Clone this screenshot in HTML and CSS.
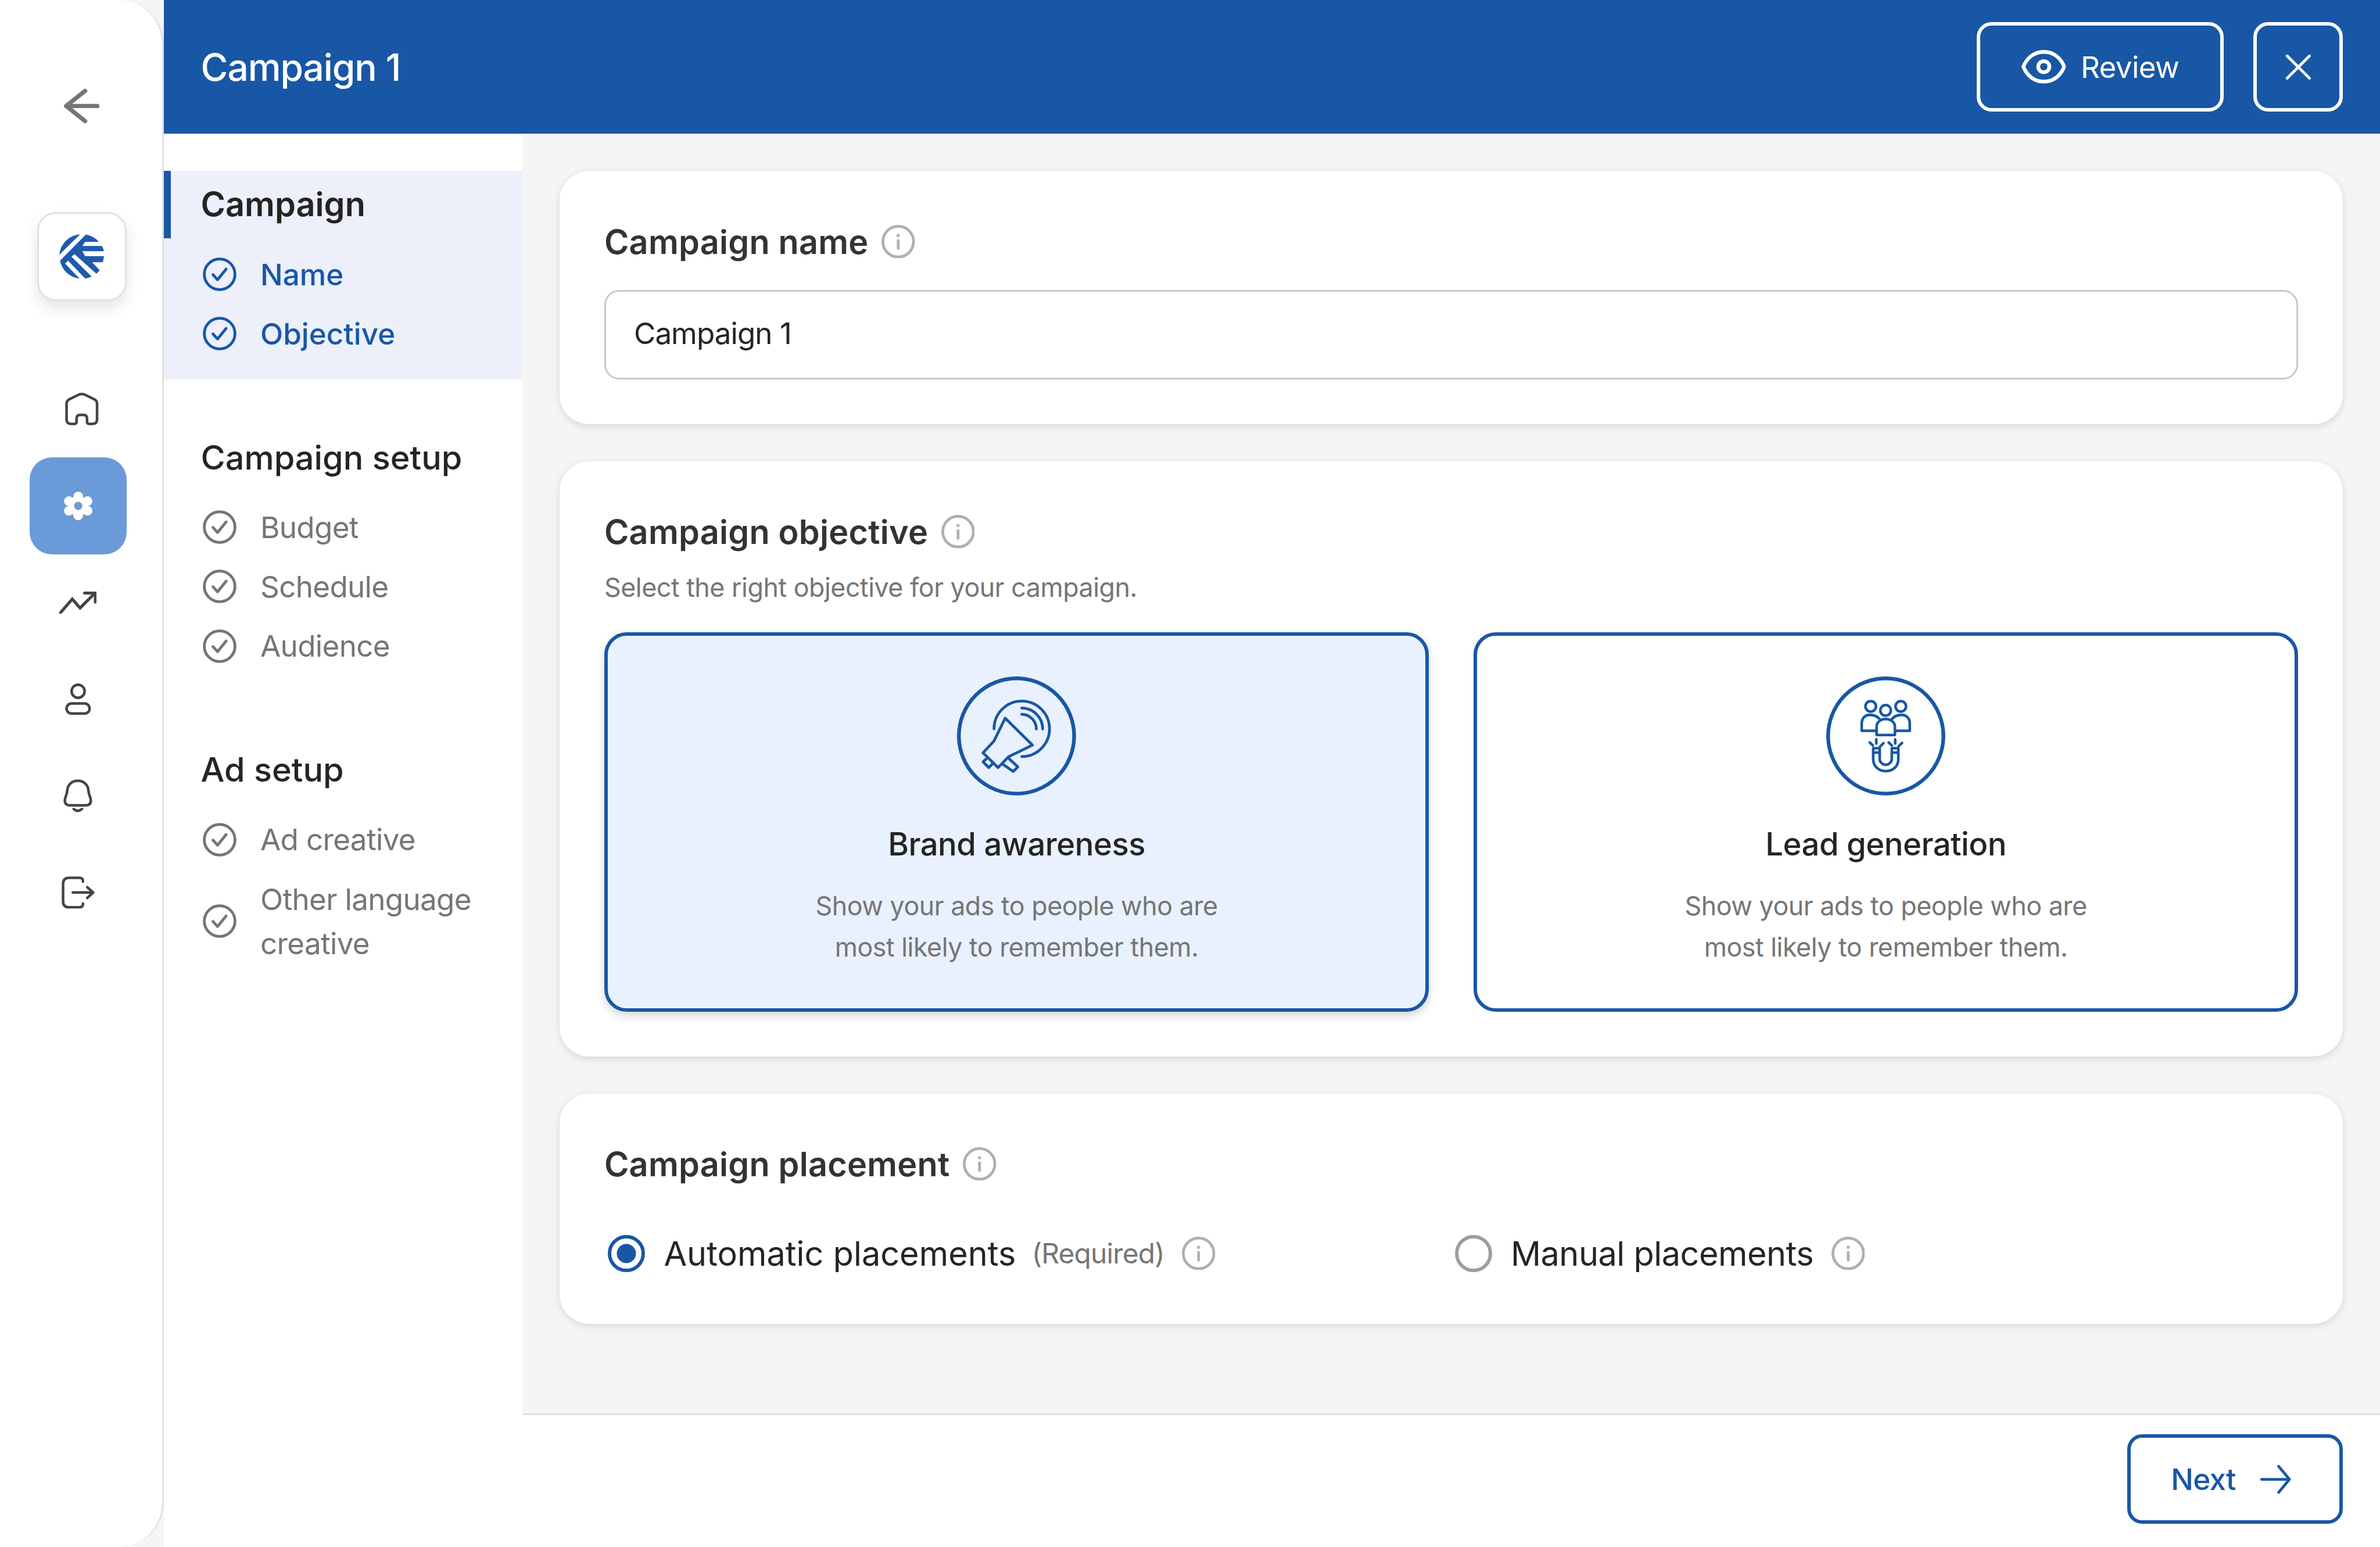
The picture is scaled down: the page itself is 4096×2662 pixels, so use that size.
FILE: index.html
```html
<!DOCTYPE html>
<html lang="en">

<head>
    <meta charset="UTF-8">
    <title>Campaign 1</title>
    <link rel="stylesheet" href="styles.css">
</head>

<body>
    <!-- shared icons -->
    <svg class="defs" aria-hidden="true">
        <symbol id="icon-check" viewBox="0 0 20 20">
            <circle cx="10" cy="10" r="8.25" fill="none" stroke="currentColor" stroke-width="1.5"/>
            <path d="M6.4 10.2L8.9 12.9L13.5 7.2" fill="none" stroke="currentColor" stroke-width="1.5" stroke-linecap="round" stroke-linejoin="round"/>
        </symbol>
        <symbol id="icon-info" viewBox="0 0 18 18">
            <circle cx="9" cy="9" r="8.25" fill="none" stroke="currentColor" stroke-width="1.5"/>
            <circle cx="9" cy="5.7" r="0.85" fill="currentColor"/>
            <path d="M9 8.4V12.6" fill="none" stroke="currentColor" stroke-width="1.5" stroke-linecap="round"/>
        </symbol>
    </svg>

    <div class="app">
        <aside class="sidebar">
            <div class="side-top">
                <svg class="back-icon" viewBox="0 0 19 19" fill="none" stroke="currentColor" stroke-width="2.3" stroke-linecap="round" stroke-linejoin="round">
                    <path d="M18 9.5H1.2M11.4 1.4L1.2 9.5L11.4 17.6"/>
                </svg>
                <div class="logo-box">
                    <svg class="logo" viewBox="25 28 285 285" fill="#1e5bae">
                        <path d="M158 29L25 160A143 143 0 0 1 158 29Z"/>
                        <path d="M30 197L195 30A143 143 0 0 1 278 77L190 77L172 103L298 103A143 143 0 0 1 310 137L172 137L190 168L310 168A143 143 0 0 1 303 207L235 207L283 258A143 143 0 0 1 262 280L122 155L103 172L232 298A143 143 0 0 1 190 311L82 198L62 215L155 312A143 143 0 0 1 30 197Z"/>
                    </svg>
                </div>
            </div>
            <nav class="side-nav">
                <div class="side-item side-item-home">
                    <svg class="icon-home" viewBox="0 0 18 18" fill="none" stroke="currentColor" stroke-width="1.4" stroke-linejoin="round">
                        <path d="M7.6 1.2Q9 .6 10.4 1.2L15.8 3.8Q17.2 4.5 17.2 6.2V14.6Q17.2 17 14.8 17H13Q11.8 17 11.8 15.8V14Q11.8 12.2 10 12.2H8Q6.2 12.2 6.2 14V15.8Q6.2 17 5 17H3.2Q.8 17 .8 14.6V6.2Q.8 4.5 2.2 3.8Z"/>
                    </svg>
                </div>
                <div class="side-item side-item-active">
                    <svg class="icon-gear" viewBox="0 0 16 16">
                        <g fill="#fff">
                            <circle cx="8" cy="8" r="5.4"/>
                            <circle cx="8" cy="2.9" r="2.6"/>
                            <circle cx="8" cy="13.1" r="2.6"/>
                            <circle cx="3.0" cy="5.4" r="2.6"/>
                            <circle cx="13" cy="5.4" r="2.6"/>
                            <circle cx="3.0" cy="10.6" r="2.6"/>
                            <circle cx="13" cy="10.6" r="2.6"/>
                        </g>
                        <circle cx="8" cy="8" r="2.2" fill="#6a9ad8"/>
                    </svg>
                </div>
                <div class="side-item">
                    <svg class="icon-trend" viewBox="0 0 20 12" fill="none" stroke="currentColor" stroke-width="1.6" stroke-linecap="round">
                        <path d="M.6 11.4L7 4L11.2 8.8L19 1"/>
                        <path d="M13.6 .8H19.4V5.6"/>
                    </svg>
                </div>
                <div class="side-item">
                    <svg class="icon-user" viewBox="0 0 14 17" fill="none" stroke="currentColor" stroke-width="1.4">
                        <circle cx="7" cy="4.2" r="3.5"/>
                        <rect x=".8" y="10.8" width="12.4" height="5.4" rx="2.7"/>
                    </svg>
                </div>
                <div class="side-item">
                    <svg class="icon-bell" viewBox="0 0 16 18" fill="none" stroke="currentColor" stroke-width="1.4" stroke-linecap="round">
                        <path d="M7.8 .8C4.5 .8 2.3 3 2.1 6C2 8.5 .8 9.5 .8 11.5C.8 13.3 2 14 3.5 14H12C13.6 14 14.8 13.3 14.8 11.5C14.8 9.5 13.6 8.5 13.5 6C13.3 3 11 .8 7.8 .8Z"/>
                        <path d="M5.6 16Q7.8 17.8 10 16"/>
                    </svg>
                </div>
                <div class="side-item">
                    <svg class="icon-logout" viewBox="0 0 18 17.4" fill="none" stroke="currentColor" stroke-width="1.4" stroke-linecap="round" stroke-linejoin="round">
                        <path d="M11.5 2.8V2.4Q11.5 .8 9.5 .8H4Q.8 .8 .8 4V13.4Q.8 16.6 4 16.6H9.5Q11.5 16.6 11.5 15V14.6"/>
                        <path d="M6 8.7H17M13.8 5.8L17 8.7L13.8 11.6"/>
                    </svg>
                </div>
            </nav>
        </aside>

        <div class="main">
            <header class="topbar">
                <h1 class="topbar-title">Campaign 1</h1>
                <div class="topbar-actions">
                    <button class="btn-outline btn-review">
                        <svg class="icon-eye" viewBox="0 0 24 18" fill="none" stroke="currentColor" stroke-width="2" stroke-linejoin="round">
                            <path d="M1 9C3 4 7 1 12 1C17 1 21 4 23 9C21 14 17 17 12 17C7 17 3 14 1 9Z"/>
                            <circle cx="12" cy="9" r="3"/>
                        </svg>
                        Review
                    </button>
                    <button class="btn-outline btn-close">
                        <svg class="icon-close" viewBox="0 0 14 14" fill="none" stroke="currentColor" stroke-width="1.5" stroke-linecap="round">
                            <path d="M1 1L13 13M13 1L1 13"/>
                        </svg>
                    </button>
                </div>
            </header>

            <div class="body">
                <div class="steps">
                    <section class="step-group step-group-active">
                        <h2 class="step-title">Campaign</h2>
                        <div class="step"><svg class="step-icon"><use href="#icon-check"/></svg>Name</div>
                        <div class="step"><svg class="step-icon"><use href="#icon-check"/></svg>Objective</div>
                    </section>
                    <section class="step-group">
                        <h2 class="step-title">Campaign setup</h2>
                        <div class="step"><svg class="step-icon"><use href="#icon-check"/></svg>Budget</div>
                        <div class="step"><svg class="step-icon"><use href="#icon-check"/></svg>Schedule</div>
                        <div class="step"><svg class="step-icon"><use href="#icon-check"/></svg>Audience</div>
                    </section>
                    <section class="step-group">
                        <h2 class="step-title">Ad setup</h2>
                        <div class="step"><svg class="step-icon"><use href="#icon-check"/></svg>Ad creative</div>
                        <div class="step"><svg class="step-icon"><use href="#icon-check"/></svg><span>Other language<br>creative</span></div>
                    </section>
                </div>

                <div class="right">
                    <div class="content">
                        <section class="card">
                            <h3 class="card-title">Campaign name <svg class="icon-info"><use href="#icon-info"/></svg></h3>
                            <input class="name-input" type="text" value="Campaign 1">
                        </section>

                        <section class="card">
                            <h3 class="card-title">Campaign objective <svg class="icon-info"><use href="#icon-info"/></svg></h3>
                            <p class="card-sub">Select the right objective for your campaign.</p>
                            <div class="objectives">
                                <div class="objective objective-selected">
                                    <svg class="objective-icon" viewBox="177 107 768 768" fill="none" stroke="currentColor" stroke-width="18" stroke-linecap="round" stroke-linejoin="round">
                                        <circle cx="561" cy="491" r="372" stroke-width="24"/>
                                        <path d="M416 445A179 179 0 1 1 595 624"/>
                                        <path d="M595 311A135 135 0 0 1 730 446"/>
                                        <path d="M595 351A95 95 0 0 1 689 446"/>
                                        <path d="M488 376L664 550L510 625L442 695L345 600L415 525Z"/>
                                        <path d="M365 640L345 658L382 695L405 672"/>
                                        <path d="M515 640L570 690L540 720L475 675"/>
                                    </svg>
                                    <h4 class="objective-title">Brand awareness</h4>
                                    <p class="objective-text">Show your ads to people who are<br>most likely to remember them.</p>
                                </div>
                                <div class="objective">
                                    <svg class="objective-icon" viewBox="147 107 768 768" fill="none" stroke="currentColor" stroke-width="17" stroke-linecap="round" stroke-linejoin="round">
                                        <circle cx="531" cy="491" r="372" stroke-width="24"/>
                                        <circle cx="434" cy="300" r="34"/>
                                        <circle cx="628" cy="300" r="34"/>
                                        <circle cx="530" cy="326" r="34"/>
                                        <path d="M490 380C470 360 450 355 430 355C400 355 376 375 376 410V458H468"/>
                                        <path d="M572 380C592 360 612 355 632 355C662 355 686 375 686 410V458H594"/>
                                        <path d="M472 485V430C472 400 500 382 530 382C560 382 590 400 590 430V485Z"/>
                                        <path d="M450 570V640C450 690 490 718 531 718C575 718 612 690 612 640V570H570V640C570 660 550 677 531 677C510 677 492 660 492 640V570Z"/>
                                        <path d="M450 598H492M570 598H612"/>
                                        <path d="M428 533L448 553M470 513V540M494 560L516 538M550 533L570 553M592 513V540M614 558L636 536"/>
                                    </svg>
                                    <h4 class="objective-title">Lead generation</h4>
                                    <p class="objective-text">Show your ads to people who are<br>most likely to remember them.</p>
                                </div>
                            </div>
                        </section>

                        <section class="card">
                            <h3 class="card-title">Campaign placement <svg class="icon-info"><use href="#icon-info"/></svg></h3>
                            <div class="placements">
                                <div class="placement">
                                    <span class="radio radio-checked"></span>
                                    <span>Automatic placements</span>
                                    <span class="placement-note">(Required)</span>
                                    <svg class="icon-info"><use href="#icon-info"/></svg>
                                </div>
                                <div class="placement">
                                    <span class="radio"></span>
                                    <span class="placement-label-tight">Manual placements</span>
                                    <svg class="icon-info"><use href="#icon-info"/></svg>
                                </div>
                            </div>
                        </section>
                    </div>

                    <footer class="footer">
                        <button class="btn-next">
                            Next
                            <svg class="icon-next" viewBox="0 0 17 16" fill="none" stroke="currentColor" stroke-width="1.5" stroke-linecap="round" stroke-linejoin="round">
                                <path d="M1 8H16M10.2 1L16 8L10.2 15"/>
                            </svg>
                        </button>
                    </footer>
                </div>
            </div>
        </div>
    </div>
</body>

</html>
```

FILE: styles.css
```css
* {
    box-sizing: border-box;
}

body {
    margin: 0;
    font-family: Inter, "Noto Sans", sans-serif;
    color: #242424;
    background-color: #f5f5f5;
}

h1, h2, h3, h4, p {
    margin: 0;
}

button {
    font-family: inherit;
    cursor: pointer;
}

.defs {
    display: none;
}

.app {
    display: flex;
    width: 100%;
    height: 100vh;
    overflow: hidden;
}

/* Left icon rail */
.sidebar {
    flex: none;
    width: 281.6px;
    padding: 152px 0 0 51.2px;
    background-color: #fff;
    border-right: 3.2px solid #e0e0e0;
    border-radius: 0 76.8px 76.8px 0;
    color: #444;
}

.side-top {
    display: flex;
    flex-direction: column;
    align-items: center;
    width: 153.6px;
    margin-left: 12.8px;
}

.back-icon {
    width: 60.8px;
    height: 60.8px;
    color: #757575;
}

.logo-box {
    display: flex;
    align-items: center;
    justify-content: center;
    width: 153.6px;
    height: 153.6px;
    margin-top: 152px;
    background-color: #fff;
    border: 3.2px solid #e2e2e2;
    border-radius: 32px;
    box-shadow: 0 12.8px 25.6px rgba(0, 0, 0, 0.1);
}

.logo {
    width: 76.8px;
    height: 76.8px;
}

.side-nav {
    margin-top: 102.4px;
}

.side-item {
    display: flex;
    align-items: center;
    justify-content: center;
    width: 166.4px;
    height: 166.4px;
}

.side-item-home {
    padding-left: 12.8px;
}

.side-item-active {
    background-color: #6a9ad8;
    border-radius: 38.4px;
}

.icon-home {
    width: 57.6px;
    height: 57.6px;
}

.icon-gear {
    width: 51.2px;
    height: 51.2px;
}

.icon-trend {
    width: 64px;
    height: 38.4px;
}

.icon-user {
    width: 44.8px;
    height: 54.4px;
}

.icon-bell {
    width: 51.2px;
    height: 57.6px;
}

.icon-logout {
    width: 57.6px;
    height: 55.7px;
}

/* Main column */
.main {
    flex: 1;
    display: flex;
    flex-direction: column;
    min-width: 0;
}

.topbar {
    flex: none;
    display: flex;
    align-items: center;
    justify-content: space-between;
    height: 230.4px;
    padding: 0 64px 0 64px;
    background-color: #1857a5;
    color: #fff;
}

.topbar-title {
    font-size: 64px;
    font-weight: 500;
    letter-spacing: -1.1px;
}

.topbar-actions {
    display: flex;
    gap: 51.2px;
}

.btn-outline {
    display: flex;
    align-items: center;
    justify-content: center;
    height: 153.6px;
    color: #fff;
    font-size: 51.2px;
    font-weight: 400;
    background: none;
    border: 6.4px solid #fff;
    border-radius: 25.6px;
}

.btn-review {
    gap: 25.6px;
    width: 425.6px;
    letter-spacing: -0.6px;
}

.btn-close {
    width: 153.6px;
}

.icon-eye {
    width: 76.8px;
    height: 57.6px;
}

.icon-close {
    width: 44.8px;
    height: 44.8px;
}

.body {
    flex: 1;
    display: flex;
    min-height: 0;
}

/* Step list */
.steps {
    flex: none;
    width: 617.6px;
    padding-top: 64px;
    background-color: #fff;
}

.step-group {
    padding: 0 0 27.2px 64px;
    margin-bottom: 76.8px;
    color: #757575;
}

.step-group-active {
    background-color: #edeffb;
    color: #1857a5;
    position: relative;
}

.step-group-active::before {
    content: "";
    position: absolute;
    left: 0;
    top: 0;
    width: 12.8px;
    height: 115.2px;
    background-color: #1857a5;
}

.step-title {
    height: 115.2px;
    margin-bottom: 11.2px;
    font-size: 57.6px;
    font-weight: 500;
    line-height: 115.2px;
    color: #242424;
}

.step-group-active .step-title {
    font-weight: 600;
}

.step {
    display: flex;
    align-items: center;
    gap: 38.4px;
    padding: 12.8px 0;
    font-size: 51.2px;
    line-height: 76.8px;
    letter-spacing: -0.7px;
}

.step-group-active .step {
    font-weight: 500;
    letter-spacing: 0;
}

.step-icon {
    flex: none;
    width: 64px;
    height: 64px;
}

/* Cards */
.right {
    flex: 1;
    display: flex;
    flex-direction: column;
    min-width: 0;
}

.content {
    flex: 1;
    display: flex;
    flex-direction: column;
    gap: 64px;
    padding: 64px 64px 0 64px;
}

.card {
    padding: 76.8px;
    background-color: #fff;
    border-radius: 51.2px;
    box-shadow: 0 3.2px 12.8px rgba(0, 0, 0, 0.12);
}

.card-title {
    display: flex;
    align-items: center;
    gap: 22.4px;
    height: 89.6px;
    font-size: 57.6px;
    font-weight: 600;
    letter-spacing: 0.2px;
    color: #333;
}

.icon-info {
    flex: none;
    width: 57.6px;
    height: 57.6px;
    color: #b0b0b0;
}

.name-input {
    display: block;
    width: 100%;
    height: 153.6px;
    margin-top: 38.4px;
    padding: 0 48px 6.4px;
    font-family: inherit;
    font-size: 51.2px;
    letter-spacing: -1px;
    color: #242424;
    background-color: #fff;
    border: 3.2px solid #c8c9cb;
    border-radius: 25.6px;
}

.card-sub {
    margin-top: 12.8px;
    font-size: 44.8px;
    line-height: 76.8px;
    letter-spacing: -0.5px;
    color: #757575;
}

.objectives {
    display: grid;
    grid-template-columns: 1fr 1fr;
    gap: 76.8px;
    margin-top: 38.4px;
}

.objective {
    display: flex;
    flex-direction: column;
    align-items: center;
    height: 652.8px;
    padding-top: 70.4px;
    color: #1857a5;
    text-align: center;
    border: 6.4px solid #1857a5;
    border-radius: 38.4px;
}

.objective-selected {
    background-color: #e9f1fe;
    box-shadow: 0 6.4px 16px rgba(0, 0, 0, 0.16);
}

.objective-icon {
    width: 204.8px;
    height: 204.8px;
}

.objective-title {
    margin-top: 38.4px;
    font-size: 54.4px;
    font-weight: 500;
    line-height: 89.6px;
    letter-spacing: -0.5px;
    color: #242424;
}

.objective-text {
    margin-top: 27.2px;
    font-size: 44.8px;
    line-height: 70.4px;
    letter-spacing: -0.5px;
    color: #757575;
}

.placements {
    display: grid;
    grid-template-columns: 1fr 1fr;
    margin-top: 64px;
}

.placement {
    display: flex;
    align-items: center;
    height: 89.6px;
    font-size: 57.6px;
    color: #242424;
}

.placement-label-tight {
    letter-spacing: -0.5px;
}

.radio {
    flex: none;
    width: 64px;
    height: 64px;
    margin: 0 32px 0 6.4px;
    border: 6.4px solid #9e9e9e;
    border-radius: 50%;
}

.radio-checked {
    border-color: #1857a5;
    background: radial-gradient(circle, #1857a5 0 16px, #fff 17px);
}

.placement-note {
    margin-left: 27.2px;
    font-size: 48px;
    letter-spacing: -0.9px;
    color: #757575;
}

.placement .icon-info {
    margin-left: 30.4px;
}

/* Bottom bar */
.footer {
    flex: none;
    display: flex;
    align-items: center;
    justify-content: flex-end;
    height: 230.4px;
    padding: 0 64px 6.4px 0;
    background-color: #fff;
    border-top: 3.2px solid #e0e0e0;
}

.btn-next {
    display: flex;
    align-items: center;
    justify-content: center;
    gap: 41.6px;
    width: 371.2px;
    height: 153.6px;
    padding: 0 12.8px 0 0;
    font-size: 51.2px;
    font-weight: 500;
    letter-spacing: -0.8px;
    color: #1857a5;
    background: #fff;
    border: 6.4px solid #1857a5;
    border-radius: 25.6px;
}

.icon-next {
    width: 54.4px;
    height: 51.2px;
}
```
